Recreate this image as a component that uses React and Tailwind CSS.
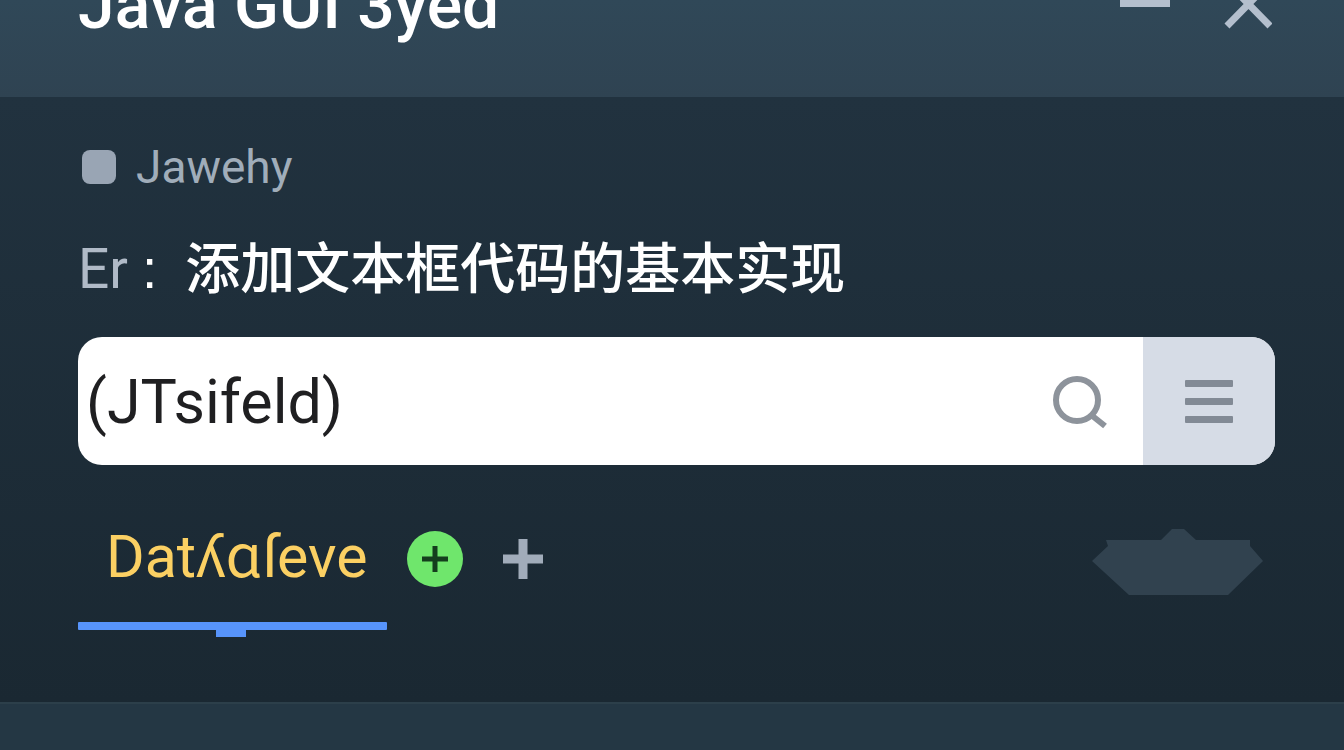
import React, { useState } from 'react'

const TitleBar = () => (
    <header className="h-[97px] overflow-hidden bg-gradient-to-b from-[#304858] to-[#2f4352] pr-18 pl-[78px]">
        <div className="-mt-[26px] flex h-16 items-center justify-between">
            <h1 className="whitespace-pre text-[66px] leading-16 font-medium text-white">Java GUI 3yed</h1>
            <div className="flex items-center gap-12 text-[#b4bfcd]">
                <button type="button" aria-label="Minimize" className="flex h-16 w-14 items-center justify-center">
                    <svg className="h-16 w-14" viewBox="0 0 56 64" fill="currentColor">
                        <rect x="0" y="25" width="50" height="8" />
                    </svg>
                </button>
                <button type="button" aria-label="Close" className="flex h-16 w-12 items-center justify-center">
                    <svg className="h-16 w-12" viewBox="0 0 48 64" fill="none" stroke="currentColor" strokeWidth="7">
                        <path d="M3 8 L46 52 M46 8 L3 52" />
                    </svg>
                </button>
            </div>
        </div>
    </header>
)

const SearchField = () => {
    const [ value, setValue ] = useState('(JTsifeld)')

    return (
        <div className="mt-8 flex h-32 overflow-hidden rounded-3xl bg-white">
            <input
                type="text"
                id="field"
                className="min-w-0 flex-1 pt-1 pl-2 text-[61px] text-[#1f1f21] outline-none"
                value={value}
                onChange={e => setValue(e.target.value)}
            />
            <button type="button" aria-label="Search" className="flex w-32 items-center justify-center text-[#8d939b]">
                <svg className="size-14" viewBox="0 0 56 56" fill="none" stroke="currentColor" strokeWidth="6">
                    <circle cx="26" cy="27" r="21" />
                    <path d="M39 41 L54 53" />
                </svg>
            </button>
            <button type="button" aria-label="Menu" className="flex w-33 items-center justify-center bg-[#d6dce6] text-[#828a95]">
                <svg className="h-11 w-12" viewBox="0 0 48 44" fill="currentColor">
                    <rect x="0" y="1" width="48" height="7" rx="1" />
                    <rect x="0" y="19" width="48" height="7" rx="1" />
                    <rect x="0" y="37" width="48" height="7" rx="1" />
                </svg>
            </button>
        </div>
    )
}

const Tabs = () => (
    <div className="mt-14 flex items-start">
        <button type="button" className="w-[309px] text-left">
            <span className="block pl-7 text-[59px] leading-18 whitespace-nowrap text-[#fbd063]">Datʎɑſeve</span>
            <svg className="mt-7 h-4 w-full text-[#5794fb]" viewBox="0 0 309 16" fill="currentColor">
                <rect x="0" y="1" width="309" height="8" rx="1" />
                <rect x="138" y="7" width="30" height="9" />
            </svg>
        </button>
        <button type="button" aria-label="Add" className="mt-2.5 ml-5 flex size-14 items-center justify-center rounded-full bg-[#6fe66c] text-[#143d1d]">
            <svg className="size-7" viewBox="0 0 28 28" stroke="currentColor" strokeWidth="5">
                <path d="M14 1 V27 M1 14 H27" />
            </svg>
        </button>
        <button type="button" aria-label="New tab" className="mt-4.5 ml-10 text-[#a1acba]">
            <svg className="size-10" viewBox="0 0 40 40" stroke="currentColor" strokeWidth="9">
                <path d="M20 0 V40 M0 20 H40" />
            </svg>
        </button>
        <svg className="mt-2 mr-3 ml-auto h-[66px] w-[171px]" viewBox="0 0 171 66" fill="#31424f">
            <path d="M14 11 H69 L80 0 H92 L104 11 H158 V17 L171 32 L136 66 H37 L0 32 L16 17 Z" />
        </svg>
    </div>
)

const App = () => (
    <div className="flex min-h-screen flex-col bg-[#243744] font-[Roboto,'Noto_Sans_CJK_SC',sans-serif]">
        <TitleBar />
        <main className="h-[605px] bg-gradient-to-b from-[#21323f] to-[#1a2832] pt-10 pr-[69px] pl-[78px]">
            <div className="flex h-15 items-center gap-5 text-[46px] text-[#a0adba]">
                <span className="ml-1 size-[34px] rounded-lg bg-[#99a5b4]" />
                <span>Jawehy</span>
            </div>
            <label htmlFor="field" className="mt-9 flex h-18 items-center text-[55px] font-medium text-white">
                <span className="font-normal text-[#b0bac7]">Er</span>
                <span className="pr-7 pl-3.5 font-['Liberation_Sans']">:</span>
                <span>添加文本框代码的基本实现</span>
            </label>
            <SearchField />
            <Tabs />
        </main>
        <footer className="flex-1 border-t-2 border-[#2c3f4a] bg-[#243744]" />
    </div>
)

export default App
